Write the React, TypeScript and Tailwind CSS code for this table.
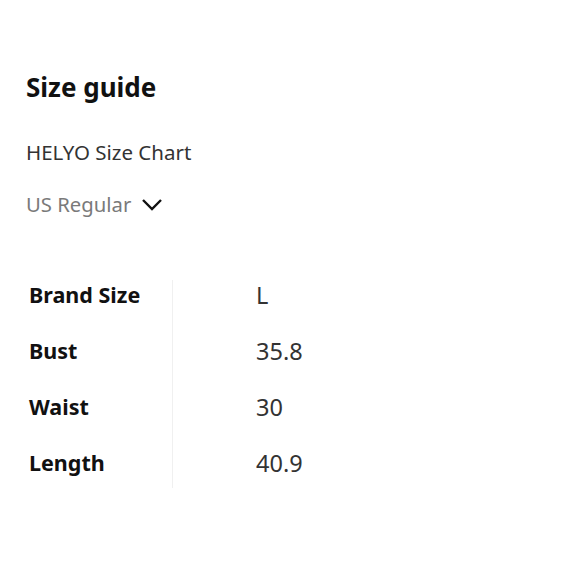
import React from "react";

const rows = [
  ["Brand Size", "L"],
  ["Bust", "35.8"],
  ["Waist", "30"],
  ["Length", "40.9"],
];

export default function App() {
  return (
    <div
      className="w-[580px] h-[580px] bg-white text-[#0f1111] pl-[26px] pt-[70px]"
      style={{ fontFamily: '"Noto Sans", Arial, sans-serif' }}
    >
      <h1 className="text-[26px] font-bold leading-[34px] text-[#111]">Size guide</h1>
      <div className="mt-[34px] text-[20.5px] leading-[28px] text-[#333]">HELYO Size Chart</div>
      <div className="mt-[24px] flex items-center gap-[10px] text-[20.3px] leading-[28px] text-[#7a7a7a]">
        <span>US Regular</span>
        <svg width="22" height="14" viewBox="0 0 22 14" fill="none">
          <path d="M2 3l9 9 9-9" stroke="#111" strokeWidth="2.4" />
        </svg>
      </div>
      <div className="mt-[62px] flex h-[208px]">
        <div className="w-[147px] border-r border-[#f0f0f0] pl-[3px]">
          {rows.map(([k]) => (
            <div key={k} className="h-[56px] pt-[1px] text-[21.5px] leading-[28px] font-bold text-[#111]">
              {k}
            </div>
          ))}
        </div>
        <div className="pl-[83px]">
          {rows.map(([k, v]) => (
            <div key={k} className="h-[56px] pt-[1px] text-[23.5px] leading-[28px] text-[#333]">
              {v}
            </div>
          ))}
        </div>
      </div>
    </div>
  );
}
